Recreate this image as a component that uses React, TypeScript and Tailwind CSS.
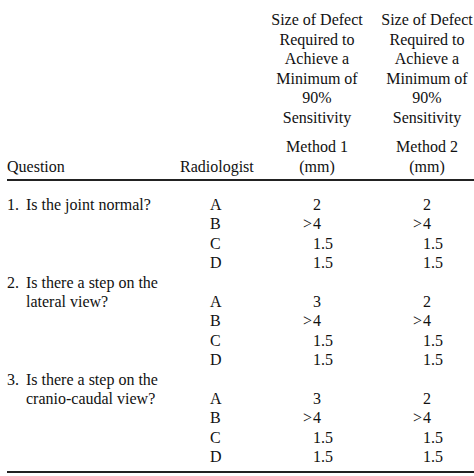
const groups = [
  {
    num: "1.",
    lines: ["Is the joint normal?"],
    rows: [
      ["A", "", "2", "", "2"],
      ["B", ">", "4", ">", "4"],
      ["C", "", "1.5", "", "1.5"],
      ["D", "", "1.5", "", "1.5"],
    ],
  },
  {
    num: "2.",
    lines: ["Is there a step on the", "lateral view?"],
    rows: [
      ["A", "", "3", "", "2"],
      ["B", ">", "4", ">", "4"],
      ["C", "", "1.5", "", "1.5"],
      ["D", "", "1.5", "", "1.5"],
    ],
  },
  {
    num: "3.",
    lines: ["Is there a step on the", "cranio-caudal view?"],
    rows: [
      ["A", "", "3", "", "2"],
      ["B", ">", "4", ">", "4"],
      ["C", "", "1.5", "", "1.5"],
      ["D", "", "1.5", "", "1.5"],
    ],
  },
];

const headerLines = [
  "Size of Defect",
  "Required to",
  "Achieve a",
  "Minimum of",
  "90%",
  "Sensitivity",
];

const HeaderCol = ({ method }: { method: string }) => (
  <div className="w-[110px] shrink-0 text-center leading-[19.5px]">
    {headerLines.map((l) => (
      <div key={l} className="whitespace-nowrap">
        {l}
      </div>
    ))}
    <div className="mt-[10px]">{method}</div>
    <div>(mm)</div>
  </div>
);

// digits line up on their left edge; a ">" sign hangs to the left
const Value = ({ prefix, value }: { prefix: string; value: string }) => (
  <div className="w-[110px] shrink-0 flex pl-[39px]">
    <span className="w-[12px] text-right pr-[1px]">{prefix}</span>
    <span>{value}</span>
  </div>
);

export default function App() {
  return (
    <div
      className="w-[474px] h-[476px] overflow-hidden bg-white text-[#111] text-[16px] pl-[7px] pt-[10px]"
      style={{ fontFamily: '"Liberation Serif", "Times New Roman", serif' }}
    >
      {/* Header */}
      <div className="flex items-end leading-[19.5px]">
        <div className="w-[173px] shrink-0">Question</div>
        <div className="w-[82px] shrink-0">Radiologist</div>
        <HeaderCol method="Method 1" />
        <HeaderCol method="Method 2" />
      </div>
      <div className="mt-[3px] h-[2px] bg-[#222]" />

      {/* Body */}
      <div className="mt-[14px] leading-[19.4px]">
        {groups.map((g) => (
          <div key={g.num} className="flex">
            <div className="w-[173px] shrink-0 flex">
              <span className="w-[19px] shrink-0">{g.num}</span>
              <div>
                {g.lines.map((l) => (
                  <div key={l} className="whitespace-nowrap">
                    {l}
                  </div>
                ))}
              </div>
            </div>
            <div className={g.lines.length > 1 ? "pt-[19.4px]" : ""}>
              {g.rows.map((r) => (
                <div key={r[0]} className="flex">
                  <div className="w-[82px] shrink-0 pl-[30px]">{r[0]}</div>
                  <Value prefix={r[1]} value={r[2]} />
                  <Value prefix={r[3]} value={r[4]} />
                </div>
              ))}
            </div>
          </div>
        ))}
      </div>
      <div className="mt-[4px] h-[2px] bg-[#222]" />
    </div>
  );
}
